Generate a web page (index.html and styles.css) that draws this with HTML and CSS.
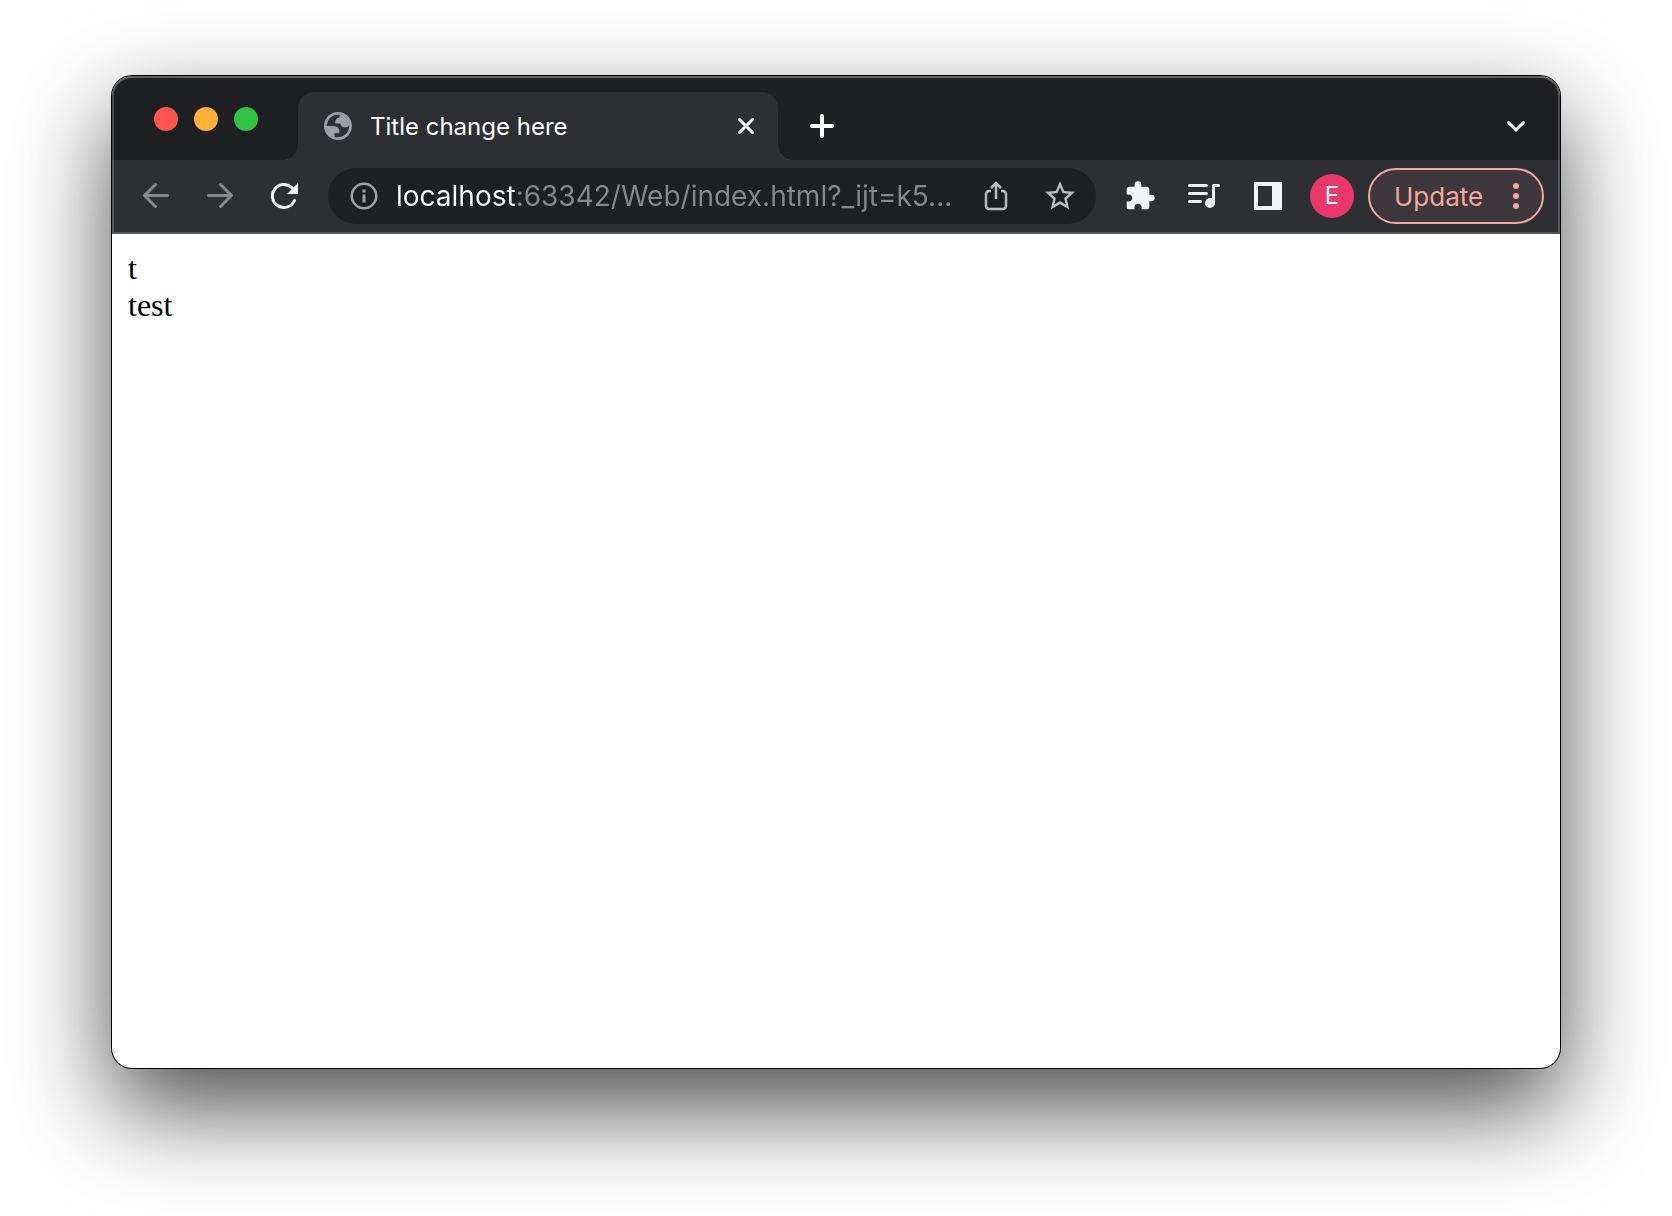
FILE: index.html
```html
<!DOCTYPE html>
<html lang="en">
<head>
    <meta charset="UTF-8">
    <meta name="viewport" content="width=device-width, initial-scale=1.0">
    <title>Title change here</title>
    <link rel="stylesheet" href="styles.css">
</head>
<body>
    <div class="window">
        <header class="chrome">
            <div class="tab-strip">
                <div class="lights">
                    <button class="light red" aria-label="Close window"></button>
                    <button class="light yellow" aria-label="Minimize window"></button>
                    <button class="light green" aria-label="Zoom window"></button>
                </div>
                <div class="tab">
                    <svg class="favicon" width="28" height="28" viewBox="2 2 20 20"><path fill="#9aa0a6" fill-rule="evenodd" d="M12 2C6.480 2 2 6.480 2 12s4.480 10 10 10 10-4.480 10-10S17.520 2 12 2zM4 12h4.400c3.407.022 4.922 1.730 4.543 5.127H9.488v2.470a8.004 8.004 0 0 0 10.498-8.083C19.327 12.504 18.332 13 17 13c-2.137 0-3.206-.916-3.206-2.750h-3.748c-.274-2.728.683-4.092 2.870-4.092 0-.975.327-1.597.811-1.970A8.004 8.004 0 0 0 4 12z"/></svg>
                    <span class="tab-title">Title change here</span>
                    <button class="tab-close" aria-label="Close tab">
                        <svg width="20" height="20" viewBox="0 0 20 20"><path d="M3.500 3.500l13 13M16.500 3.500l-13 13" stroke="#fff" stroke-width="3" stroke-linecap="round"/></svg>
                    </button>
                </div>
                <button class="icon-btn new-tab" aria-label="New tab">
                    <svg width="24" height="24" viewBox="0 0 24 24"><path d="M12 2v20M2 12h20" stroke="#fff" stroke-width="4" stroke-linecap="round"/></svg>
                </button>
                <button class="icon-btn tab-search" aria-label="Search tabs">
                    <svg width="20" height="14" viewBox="0 0 20 14"><path d="M2.500 3.500L10 11l7.500-7.500" fill="none" stroke="#fff" stroke-width="3" stroke-linecap="round"/></svg>
                </button>
            </div>
            <div class="toolbar">
                <button class="icon-btn" aria-label="Back">
                    <svg width="28" height="28" viewBox="0 0 28 28"><path d="M25.500 13.500H2.500M13.500 2.500l-11 11 11 11" fill="none" stroke="#87888a" stroke-width="3" stroke-linecap="round" stroke-linejoin="round"/></svg>
                </button>
                <button class="icon-btn" aria-label="Forward">
                    <svg width="28" height="28" viewBox="0 0 28 28"><path d="M2.500 13.500h23M14.500 2.500l11 11-11 11" fill="none" stroke="#87888a" stroke-width="3" stroke-linecap="round" stroke-linejoin="round"/></svg>
                </button>
                <button class="icon-btn" aria-label="Reload">
                    <svg width="28" height="28" viewBox="0 0 28 28"><path d="M24.500 18.500A11.500 11.500 0 1 1 22 5.800" fill="none" stroke="#f1f3f4" stroke-width="3" stroke-linecap="round"/><path fill="#f1f3f4" d="M28 1v11H17z"/></svg>
                </button>
                <div class="address-bar">
                    <svg width="28" height="28" viewBox="0 0 28 28"><circle cx="14" cy="14" r="12.250" fill="none" stroke="#9aa0a6" stroke-width="2.500"/><path fill="#9aa0a6" d="M12.500 7.500h3v3h-3zM12.500 12.500h3v8h-3z"/></svg>
                    <input class="url" type="text" aria-label="Address" value="localhost:63342/Web/index.html?_ijt=k5...">
                    <button class="icon-btn" aria-label="Share">
                        <svg width="24" height="32" viewBox="0 0 24 32"><path d="M7 11H5a3 3 0 0 0-3 3v12a3 3 0 0 0 3 3h14a3 3 0 0 0 3-3V14a3 3 0 0 0-3-3h-2M12 19V4M7 8l5-5 5 5" fill="none" stroke="#bdbdbe" stroke-width="2.500"/></svg>
                    </button>
                    <button class="icon-btn" aria-label="Bookmark this tab">
                        <svg width="30" height="30" viewBox="2 2 20 20"><path fill="#bdbdbe" d="M22 9.240l-7.190-.620L12 2 9.190 8.630 2 9.240l5.460 4.730L5.820 21 12 17.270 18.180 21l-1.630-7.030L22 9.240zM12 15.400l-3.760 2.270 1-4.280-3.320-2.880 4.380-.380L12 6.100l1.710 4.040 4.380.380-3.320 2.880 1 4.280L12 15.400z"/></svg>
                    </button>
                </div>
                <button class="icon-btn" aria-label="Extensions">
                    <svg width="32" height="32" viewBox="0 0 24 24"><path fill="#f1f3f4" d="M20.500 11H19V7c0-1.100-.900-2-2-2h-4V3.500a2.500 2.500 0 0 0-5 0V5H4c-1.100 0-1.990.900-1.990 2v3.800H3.500c1.490 0 2.700 1.210 2.700 2.700s-1.210 2.700-2.700 2.700H2V20c0 1.100.900 2 2 2h3.800v-1.500c0-1.490 1.210-2.700 2.700-2.700s2.700 1.210 2.700 2.700V22H17c1.100 0 2-.900 2-2v-4h1.500a2.500 2.500 0 0 0 0-5z"/></svg>
                </button>
                <button class="icon-btn" aria-label="Media controls">
                    <svg width="32" height="28" viewBox="0 0 32 28"><path d="M1.500 3.500h17M1.500 11.500h17M1.500 19.500h11" stroke="#f1f3f4" stroke-width="3" stroke-linecap="round"/><circle cx="22" cy="21" r="5" fill="#f1f3f4"/><path d="M25.500 21V3.500h5" fill="none" stroke="#f1f3f4" stroke-width="3" stroke-linecap="round" stroke-linejoin="round"/></svg>
                </button>
                <button class="icon-btn" aria-label="Side panel">
                    <svg width="28" height="28" viewBox="0 0 28 28"><path fill="#f1f3f4" fill-rule="evenodd" d="M0 0h28v28H0zM4 4v20h14V4z"/></svg>
                </button>
                <button class="icon-btn" aria-label="Profile"><span class="avatar">E</span></button>
                <button class="update">
                    <span>Update</span>
                    <svg width="8" height="28" viewBox="0 0 8 28"><g fill="#f3a6a0"><circle cx="4" cy="4" r="3"/><circle cx="4" cy="14" r="3"/><circle cx="4" cy="24" r="3"/></g></svg>
                </button>
            </div>
        </header>
        <main class="page">
            <div>t</div>
            <div>test</div>
        </main>
    </div>
</body>
</html>
```
FILE: styles.css
```css
* {
    box-sizing: border-box;
}
body {
    margin: 0;
    padding: 76px 112px 148px;
    min-height: 100vh;
    display: flex;
    background: white;
    font-family: Inter, "Liberation Sans", sans-serif;
}
button {
    padding: 0;
    border: none;
    background: none;
    color: inherit;
    font: inherit;
    cursor: pointer;
}
svg {
    display: block;
    flex-shrink: 0;
}
.window {
    flex: 1;
    min-width: 0;
    display: flex;
    flex-direction: column;
    border-radius: 20px;
    background: white;
    box-shadow: 0 0 0 1px #000, 0 40px 96px rgba(0, 0, 0, 0.7);
}
.chrome {
    position: relative;
    border-radius: 20px 20px 0 0;
    background: #1e1f21;
    color: white;
}
/* light rim around the dark part of the window */
.chrome::after {
    content: "";
    position: absolute;
    inset: 0;
    border: 2px solid rgba(255, 255, 255, 0.2);
    border-top-color: rgba(255, 255, 255, 0.3);
    border-radius: 20px 20px 0 0;
    pointer-events: none;
}
.tab-strip {
    display: flex;
    align-items: flex-end;
    height: 84px;
}
.lights {
    display: flex;
    gap: 16px;
    width: 186px;
    padding: 0 0 29px 42px;
}
.light {
    width: 24px;
    height: 24px;
    border-radius: 50%;
}
.red {
    background: #ff544d;
}
.yellow {
    background: #ffb03a;
}
.green {
    background: #2fc244;
}
.tab {
    position: relative;
    display: flex;
    align-items: center;
    width: 480px;
    height: 68px;
    padding: 0 22px 0 26px;
    border-radius: 16px 16px 0 0;
    background: #2e2f33;
}
/* curved feet on both sides of the tab */
.tab::before,
.tab::after {
    content: "";
    position: absolute;
    bottom: 0;
    width: 16px;
    height: 16px;
}
.tab::before {
    right: 100%;
    background: radial-gradient(circle at 0 0, transparent 16px, #2e2f33 16px);
}
.tab::after {
    left: 100%;
    background: radial-gradient(circle at 100% 0, transparent 16px, #2e2f33 16px);
}
.tab-title {
    flex: 1;
    padding-left: 18px;
    font-size: 24px;
}
.icon-btn {
    display: flex;
    align-items: center;
    justify-content: center;
    flex-shrink: 0;
    width: 64px;
    height: 56px;
}
.new-tab {
    height: 68px;
    margin-left: 12px;
}
.tab-search {
    height: 68px;
    margin-left: auto;
    margin-right: 12px;
}
.toolbar {
    display: flex;
    align-items: center;
    padding: 8px 16px 10px 12px;
    background: #2e2f33;
}
.address-bar {
    display: flex;
    align-items: center;
    flex: 1;
    min-width: 0;
    height: 56px;
    margin: 0 12px;
    padding: 0 4px 0 22px;
    border-radius: 28px;
    background: #1e1f21;
}
/* the host is white, the rest of the address is grey */
.url {
    flex: 1;
    min-width: 0;
    height: 56px;
    margin-left: 18px;
    padding: 0;
    border: none;
    outline: none;
    background: linear-gradient(to right, #fff 119px, #87888a 119px);
    -webkit-background-clip: text;
    background-clip: text;
    color: transparent;
    font-family: inherit;
    font-size: 28px;
}
.avatar {
    width: 44px;
    height: 44px;
    border-radius: 50%;
    background: #e8386d;
    font-size: 24px;
    line-height: 44px;
    text-align: center;
}
.update {
    display: flex;
    align-items: center;
    justify-content: space-between;
    width: 176px;
    height: 56px;
    margin-left: 4px;
    padding: 0 22px 0 24px;
    border: 2px solid #f3a6a0;
    border-radius: 28px;
    background: #3e373b;
    color: #f3a6a0;
    font-size: 26px;
}
.page {
    flex: 1;
    padding: 16px;
    color: black;
    font-family: "Liberation Serif", serif;
    font-size: 32px;
    line-height: 37px;
}
```
